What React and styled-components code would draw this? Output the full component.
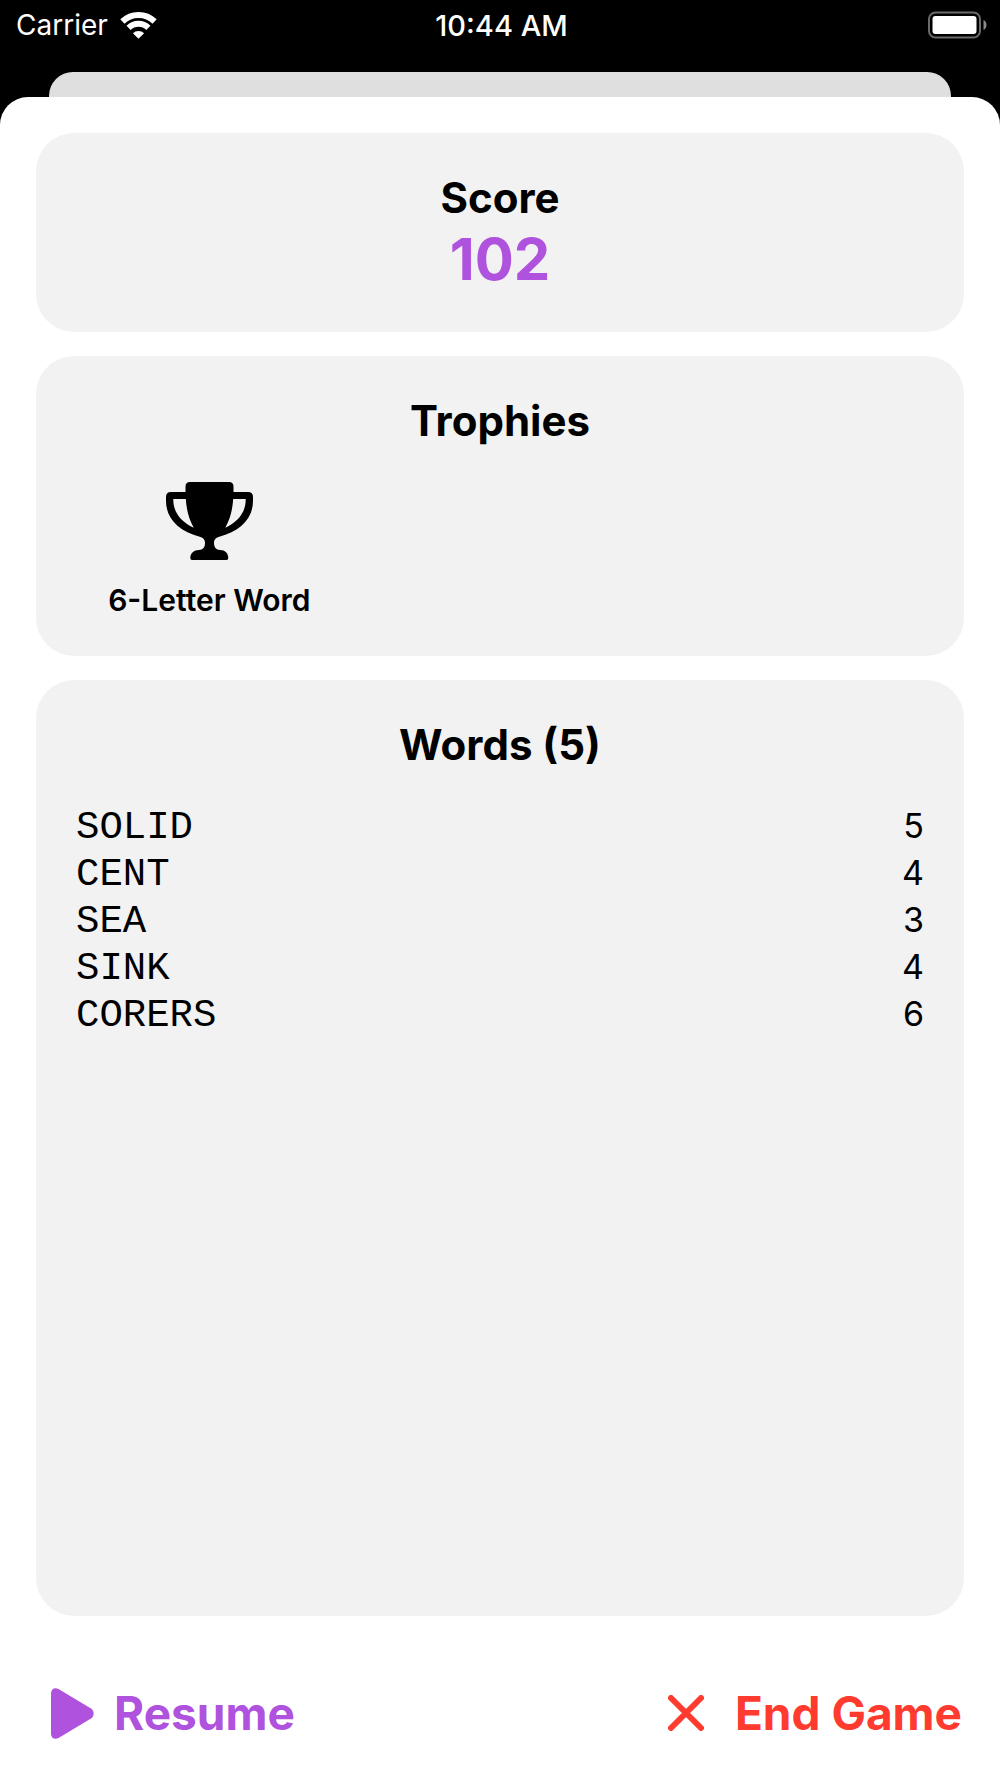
import React, { Component } from 'react';
import styled, { createGlobalStyle } from 'styled-components';

const purple = '#af52de';
const red = '#ff3b30';

class App extends Component {
  state = {
    score: 102,
    trophies: ['6-Letter Word'],
    words: ['SOLID', 'CENT', 'SEA', 'SINK', 'CORERS']
  }

  render() {
    const { score, trophies, words } = this.state;
    return (
      <Page>
        <GlobalStyle />
        <StatusBar>
          <Carrier>
            Carrier
            <WifiIcon />
          </Carrier>
          <Time>10:44 AM</Time>
          <BatteryIcon />
        </StatusBar>
        <BackSheet />
        <Sheet>
          <Card>
            <Title>Score</Title>
            <Score>{score}</Score>
          </Card>
          <Card>
            <Title>Trophies</Title>
            <TrophyGrid>
              {trophies.map( (trophy) =>
                <Trophy key={trophy}>
                  <TrophyIcon />
                  {trophy}
                </Trophy>
              )}
            </TrophyGrid>
          </Card>
          <Card $grow>
            <Title>Words ({words.length})</Title>
            <WordTable>
              <tbody>
                {words.map( (word) =>
                  <tr key={word}>
                    <Word>{word}</Word>
                    <Points>{word.length}</Points>
                  </tr>
                )}
              </tbody>
            </WordTable>
          </Card>
          <Actions>
            <ActionButton type="button" $color={purple} $gap={20}>
              <PlayIcon />
              Resume
            </ActionButton>
            <ActionButton type="button" $color={red} $gap={31}>
              <CloseIcon />
              End Game
            </ActionButton>
          </Actions>
        </Sheet>
      </Page>
    );
  }
}

const WifiIcon = () => (
  <svg width="37" height="28" viewBox="0 0 37 28" fill="none" stroke="#fff" strokeWidth="6" aria-hidden="true">
    <path d="M2.400 10.500a23 23 0 0 1 32.200 0" />
    <path d="M8.600 16.800a14.200 14.200 0 0 1 19.800 0" />
    <path d="M12.900 22.200a8 8 0 0 1 11.200 0L18.500 27.800z" fill="#fff" stroke="none" />
  </svg>
)

const BatteryIcon = () => (
  <Battery width="59" height="28" viewBox="0 0 59 28" aria-hidden="true">
    <rect x="1" y="1.5" width="51" height="25" rx="6.5" fill="none" stroke="#6b6b6b" strokeWidth="2" />
    <rect x="4.5" y="5" width="44" height="18" rx="3" fill="#fff" />
    <path d="M55.5 9c4 1.6 4 8.400 0 10z" fill="#8a8a8a" />
  </Battery>
)

const TrophyIcon = () => (
  <svg width="87" height="78" viewBox="0 0 87 78" aria-hidden="true">
    <path
      fillRule="evenodd"
      d="M24 0H63Q67.500 0 67.500 4.500V10H82Q87 10 87 15V19C87 36 75 49 52.500 55C49 56 48 58.500 48 61C48 65 50 68 54 68C59 68 62.300 71 62.300 76Q62.300 78 60.500 78H26Q24.300 78 24.300 76C24.300 71 28 68 33 68C37 68 39 65 39 61C39 58.500 38 56 34.500 55C12 49 0 36 0 19V15Q0 10 5 10H19.500V4.500Q19.500 0 24 0ZM19.800 17H7.300C7 30 15 40 27.700 45.700C22.500 36.500 20.500 27 19.800 17ZM67.200 17C66.500 27 64.500 36.500 59.300 45.700C72 40 80 30 79.700 17Z"
    />
  </svg>
)

const PlayIcon = () => (
  <svg width="44" height="51" viewBox="0 0 44 51" fill="currentColor" aria-hidden="true">
    <path d="M1 5.500C1 1 4.500-1 8.500 1L41 20.500c3.500 2.300 3.500 7.700 0 10L8.500 50C4.500 52 1 50 1 45.500z" />
  </svg>
)

const CloseIcon = () => (
  <svg width="36" height="36" viewBox="0 0 36 36" stroke="currentColor" strokeWidth="6" strokeLinecap="round" aria-hidden="true">
    <path d="M3 3L33 33M33 3L3 33" />
  </svg>
)

const GlobalStyle = createGlobalStyle`
  body {
    margin: 0;
    background-color: #000;
    color: #000;
    font-family: Inter, "Liberation Sans", sans-serif;
  }
`

const Page = styled.div`
  min-height: 100vh;
  display: flex;
  flex-direction: column;
`

const StatusBar = styled.header`
  height: 50px;
  padding: 0 13px 0 16px;
  margin-bottom: 22px;
  display: grid;
  grid-template-columns: 1fr auto 1fr;
  align-items: center;
  color: #fff;
  font-size: 29px;
`

const Carrier = styled.div`
  display: flex;
  align-items: center;
  gap: 12px;
  font-size: 28px;
`

const Time = styled.time`
  font-weight: 500;
`

const Battery = styled.svg`
  justify-self: end;
`

const BackSheet = styled.div`
  height: 25px;
  margin: 0 49px;
  border-radius: 24px 24px 0 0;
  background-color: #dfdfdf;
`

const Sheet = styled.main`
  flex: 1;
  padding: 36px 36px 0;
  display: flex;
  flex-direction: column;
  gap: 24px;
  border-radius: 28px 28px 0 0;
  background-color: #fff;
`

const Card = styled.section`
  flex: ${props => props.$grow ? '1' : 'none'};
  padding: 40px 40px 36px;
  border-radius: 38px;
  background-color: #f2f2f2;
`

const Title = styled.h2`
  margin: 0;
  font-size: 42px;
  font-weight: 700;
  line-height: 50px;
  text-align: center;
`

const Score = styled.div`
  color: ${purple};
  font-size: 58px;
  font-weight: 700;
  line-height: 73px;
  text-align: center;
`

const TrophyGrid = styled.div`
  padding-top: 36px;
  display: grid;
  grid-template-columns: repeat(3, 1fr);
  gap: 24px;
`

const Trophy = styled.div`
  display: flex;
  flex-direction: column;
  align-items: center;
  gap: 20px;
  font-size: 30px;
  font-weight: 600;
  line-height: 40px;
`

const WordTable = styled.table`
  width: 100%;
  margin-top: 34px;
  border-collapse: collapse;
`

const Word = styled.td`
  height: 47px;
  padding: 0;
  font-family: "Liberation Mono", monospace;
  font-size: 39px;
  line-height: 46px;
`

const Points = styled.td`
  padding: 0;
  font-size: 34px;
  line-height: 43px;
  text-align: right;
  vertical-align: top;
`

const Actions = styled.footer`
  padding: 45px 2px 37px 14px;
  display: flex;
  justify-content: space-between;
`

const ActionButton = styled.button`
  padding: 0;
  display: flex;
  align-items: center;
  gap: ${props => props.$gap}px;
  border: none;
  background: none;
  color: ${props => props.$color};
  font-family: inherit;
  font-size: 46px;
  font-weight: 700;
  line-height: 56px;
  cursor: pointer;
`

export default App;
